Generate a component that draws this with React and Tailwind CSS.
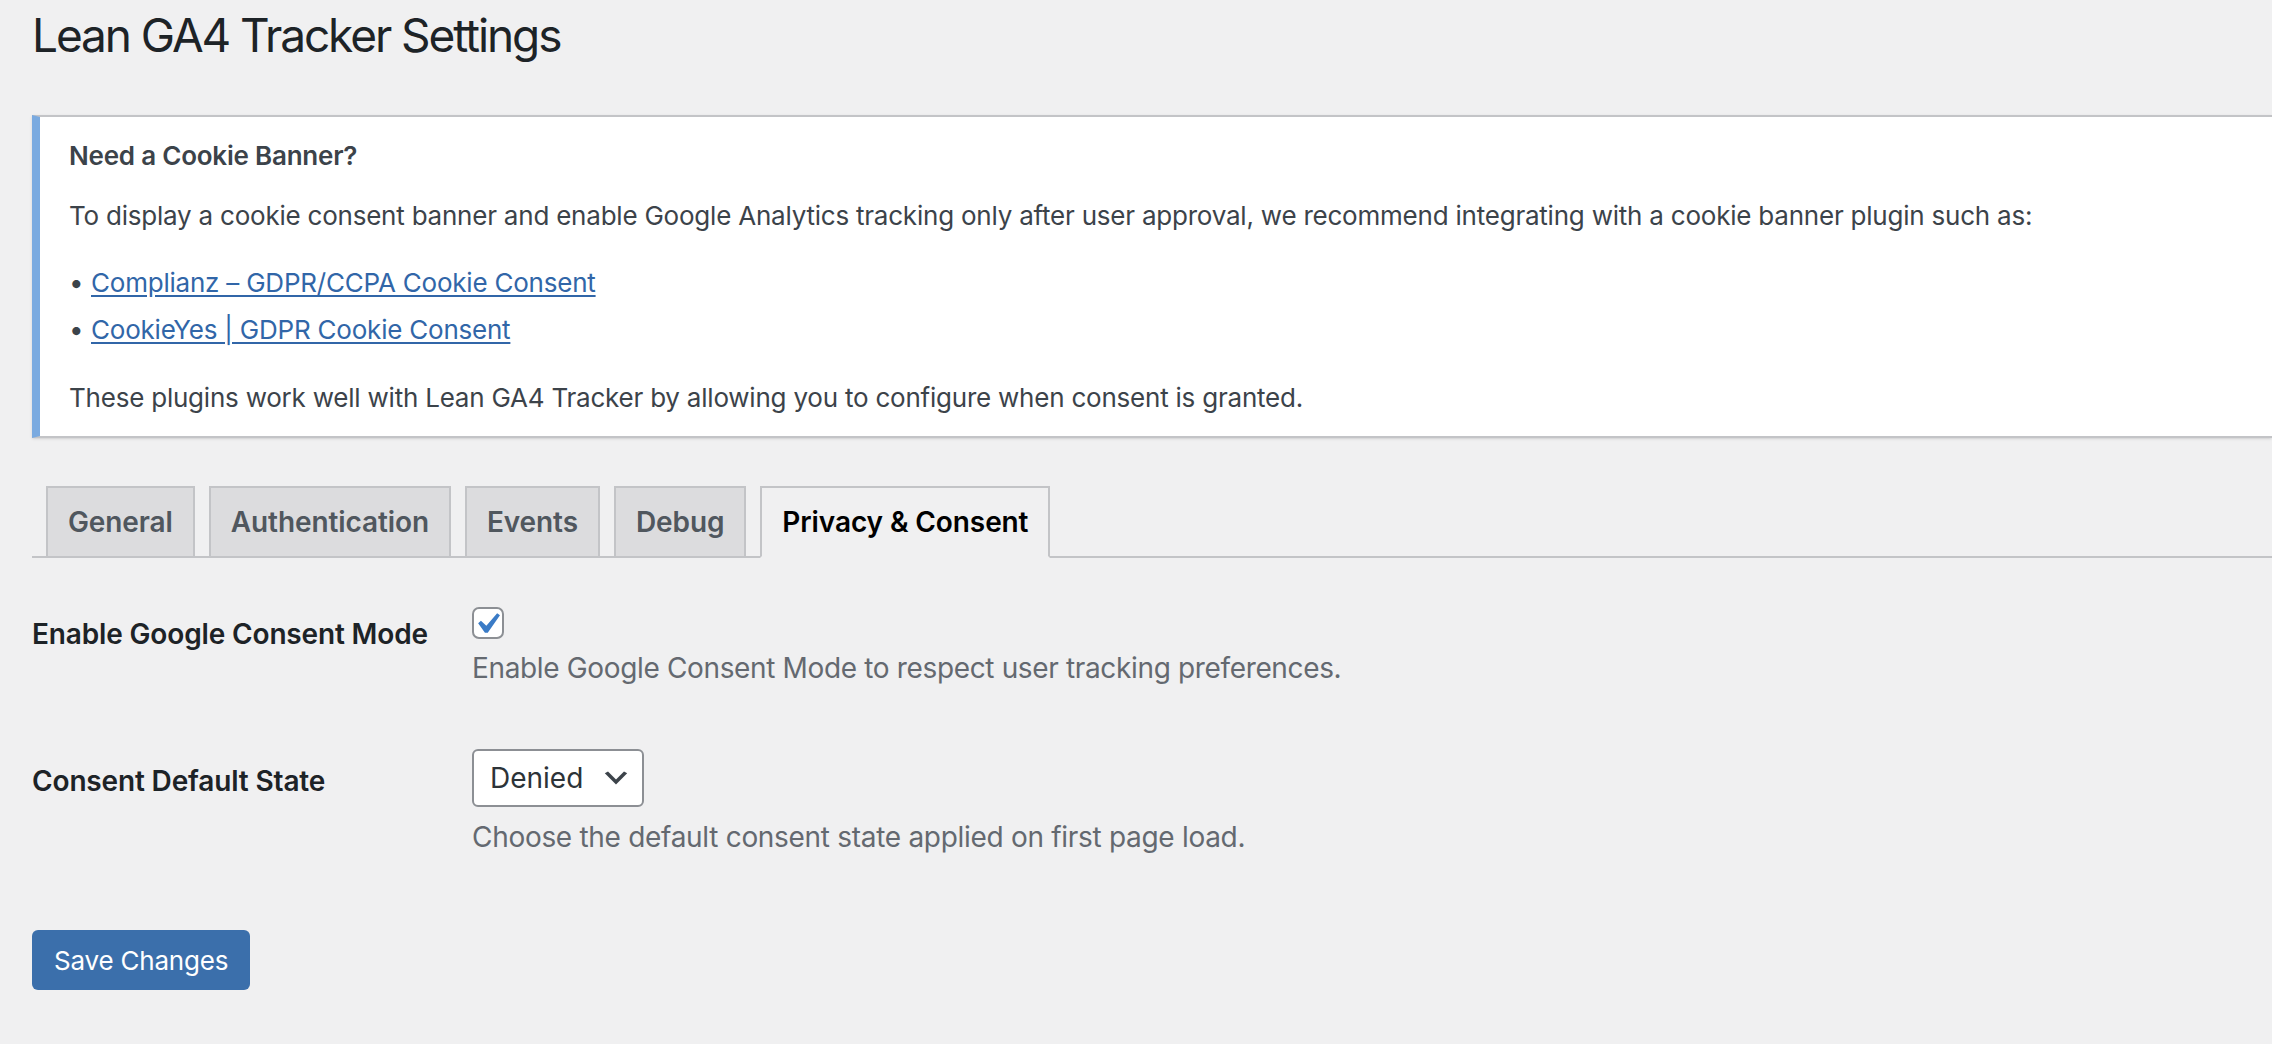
import { useState } from 'react'

const tabs = ['General', 'Authentication', 'Events', 'Debug', 'Privacy & Consent']

function Checkbox({ checked, onChange }) {
  return (
    <button
      type="button"
      onClick={() => onChange(!checked)}
      className="block w-8 h-8 mt-[5px] border-2 border-[#8c8f94] rounded-[7px] bg-white"
    >
      {checked && (
        <svg viewBox="3.81 2.86 13.33 13.33" className="w-full h-full">
          <path d="M14.83 4.89l1.34.94-5.81 8.38H9.02L5.78 9.67l1.34-1.25 2.57 2.4z" fill="#3a7bc6" />
        </svg>
      )}
    </button>
  )
}

export default function App() {
  const [active, setActive] = useState('Privacy & Consent')
  const [consentMode, setConsentMode] = useState(true)

  return (
    <div className="min-h-screen bg-[#f0f0f1] font-['Inter','Liberation_Sans',sans-serif] text-[#3c434a]">
      <div className="pl-8">
        <h1 className="pt-[5px] text-[46px] leading-[60px] font-normal tracking-[-2.1px] text-[#1d2327]">
          Lean GA4 Tracker Settings
        </h1>

        {/* notice */}
        <div className="mt-[50px] bg-white border-y-2 border-[#c3c4c7] border-l-8 border-l-[#7aaae0] px-[29px] py-[2px] text-[26px] tracking-[-0.22px] shadow-sm">
          <p className="my-[13px] py-1 leading-[39px] font-semibold">Need a Cookie Banner?</p>
          <p className="my-[13px] py-1 leading-[39px]">
            To display a cookie consent banner and enable Google Analytics tracking only after user approval, we recommend integrating with a cookie banner plugin such as:
          </p>
          <ul className="my-[26px]">
            <li className="flex leading-[36px] mb-[11px]">
              <span className="w-[22px]">•</span>
              <a href="#" className="text-[#3166a8] underline underline-offset-[3px]">Complianz – GDPR/CCPA Cookie Consent</a>
            </li>
            <li className="flex leading-[36px] mb-[11px]">
              <span className="w-[22px]">•</span>
              <a href="#" className="text-[#3166a8] underline underline-offset-[3px]">CookieYes | GDPR Cookie Consent</a>
            </li>
          </ul>
          <p className="my-[13px] py-1 leading-[39px]">
            These plugins work well with Lean GA4 Tracker by allowing you to configure when consent is granted.
          </p>
        </div>

        {/* tabs */}
        <div className="mt-[30px] pt-[18px] flex items-end border-b-2 border-[#c3c4c7]">
          {tabs.map((t) => (
            <button
              key={t}
              onClick={() => setActive(t)}
              className={
                t === active
                  ? 'ml-[14px] -mb-[2px] border-2 border-[#c3c4c7] border-b-[#f0f0f1] bg-[#f0f0f1] px-5 py-[10px] text-[28px] leading-[48px] font-semibold tracking-[-0.1px] text-black'
                  : 'ml-[14px] -mb-[2px] border-2 border-[#c3c4c7] bg-[#dcdcde] px-5 py-[10px] text-[28px] leading-[48px] font-semibold tracking-[-0.1px] text-[#50575e]'
              }
            >
              {t}
            </button>
          ))}
        </div>

        {/* form table */}
        <div className="mt-[14px] text-[28px]">
          <div className="flex">
            <div className="w-[420px] pt-[44px] pb-[36px] leading-[36.4px] font-semibold tracking-[-0.15px] text-[#1d2327]">Enable Google Consent Mode</div>
            <div className="pl-5 py-[30px]">
              <Checkbox checked={consentMode} onChange={setConsentMode} />
              <p className="mt-2 leading-[42px] tracking-[-0.35px] text-[#646970]">
                Enable Google Consent Mode to respect user tracking preferences.
              </p>
            </div>
          </div>
          <div className="flex">
            <div className="w-[420px] pt-[44px] pb-[36px] leading-[36.4px] font-semibold tracking-[-0.15px] text-[#1d2327]">Consent Default State</div>
            <div className="pl-5 py-[30px]">
              <div className="flex items-center justify-between w-[172px] h-[58px] pl-4 pr-[10px] bg-white border-2 border-[#8c8f94] rounded-[6px] text-[#2c3338]">
                <span>Denied</span>
                <svg viewBox="0 0 20 20" className="w-8 h-8">
                  <path d="M5 6l5 5 5-5 2 1-7 7-7-7 2-1z" fill="#3c434a" />
                </svg>
              </div>
              <p className="mt-[9px] leading-[42px] tracking-[-0.3px] text-[#646970]">
                Choose the default consent state applied on first page load.
              </p>
            </div>
          </div>
        </div>

        <div className="mt-[42px]">
          <button className="h-[60px] px-[22px] whitespace-nowrap rounded-[6px] bg-[#3b6fab] text-white text-[26px] tracking-[-0.2px]">
            Save Changes
          </button>
        </div>
      </div>
    </div>
  )
}
